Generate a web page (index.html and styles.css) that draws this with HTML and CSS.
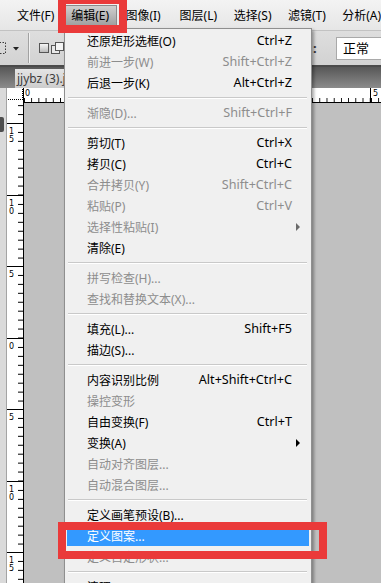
FILE: index.html
```html
<!DOCTYPE html>
<html lang="zh-CN">
  <head>
    <meta charset="utf-8" />
    <meta name="viewport" content="width=device-width, initial-scale=1" />
    <title>编辑菜单 - 定义图案</title>
    <link rel="stylesheet" href="styles.css">
  </head>
  <body>
    <div class="app">
      <!-- top menu bar -->
      <div class="menubar">
        <span class="mb-item">文件(F)</span>
        <span class="mb-item active">编辑(E)</span>
        <span class="mb-item">图像(I)</span>
        <span class="mb-item">图层(L)</span>
        <span class="mb-item">选择(S)</span>
        <span class="mb-item">滤镜(T)</span>
        <span class="mb-item">分析(A)</span>
      </div>

      <!-- tool options bar -->
      <div class="options">
        <svg class="opt-tool" width="8" height="14" viewBox="0 0 8 14">
          <rect x="-6.5" y="1.5" width="12" height="11" fill="none" stroke="#3a3a3a" stroke-dasharray="1.5 1.5"/>
        </svg>
        <svg class="opt-drop" width="6" height="4" viewBox="0 0 6 4">
          <polygon points="0,0 6,0 3,3.5" fill="#222"/>
        </svg>
        <span class="opt-sep"></span>
        <svg class="opt-btn" width="10" height="10" viewBox="0 0 10 10">
          <defs>
            <linearGradient id="g1" x1="0" y1="0" x2="0" y2="1">
              <stop offset="0" stop-color="#fafafa"/>
              <stop offset="1" stop-color="#b8b8b8"/>
            </linearGradient>
          </defs>
          <rect x="0.5" y="0.5" width="9" height="9" fill="url(#g1)" stroke="#555"/>
        </svg>
        <svg class="opt-btn2" width="13" height="13" viewBox="0 0 13 13">
          <rect x="0.5" y="3.5" width="8" height="8" fill="#e8e8e8" stroke="#555"/>
          <rect x="4.5" y="0.5" width="8" height="8" fill="#f4f4f4" stroke="#555"/>
        </svg>
        <div class="opt-right">
          <span class="opt-colon">:</span>
          <span class="opt-mode">正常</span>
        </div>
      </div>

      <!-- document tabs -->
      <div class="tabbar">
        <div class="doc-tab">jjybz (3).jpg</div>
      </div>

      <!-- rulers and canvas -->
      <div class="workspace">
        <div class="side-strip"><div class="grip"></div></div>
        <div class="vruler-col">
          <div class="ruler-corner"><div class="corner-mark"></div></div>
          <div class="vr-lead"></div>
          <div class="vr-seg"><span>1</span><span>5</span></div>
          <div class="vr-seg"><span>1</span><span>0</span></div>
          <div class="vr-seg"><span>5</span></div>
          <div class="vr-seg"><span>0</span></div>
          <div class="vr-seg"><span>5</span></div>
          <div class="vr-seg"><span>1</span><span>0</span></div>
          <div class="vr-seg"><span>1</span><span>5</span></div>
        </div>
        <div class="canvas-col">
          <div class="hruler">
            <div class="hr-seg first"><span>0</span></div>
            <div class="hr-seg"><span>5</span></div>
          </div>
          <div class="canvas"></div>
        </div>
      </div>

      <!-- open Edit menu -->
      <div class="menu">
        <div class="mi"><span>还原矩形选框(O)</span><span class="key">Ctrl+Z</span></div>
        <div class="mi off"><span>前进一步(W)</span><span class="key">Shift+Ctrl+Z</span></div>
        <div class="mi"><span>后退一步(K)</span><span class="key">Alt+Ctrl+Z</span></div>
        <div class="sep"></div>
        <div class="mi off"><span>渐隐(D)...</span><span class="key">Shift+Ctrl+F</span></div>
        <div class="sep"></div>
        <div class="mi"><span>剪切(T)</span><span class="key">Ctrl+X</span></div>
        <div class="mi"><span>拷贝(C)</span><span class="key">Ctrl+C</span></div>
        <div class="mi off"><span>合并拷贝(Y)</span><span class="key">Shift+Ctrl+C</span></div>
        <div class="mi off"><span>粘贴(P)</span><span class="key">Ctrl+V</span></div>
        <div class="mi off"><span>选择性粘贴(I)</span><span class="sub"></span></div>
        <div class="mi"><span>清除(E)</span></div>
        <div class="sep"></div>
        <div class="mi off"><span>拼写检查(H)...</span></div>
        <div class="mi off"><span>查找和替换文本(X)...</span></div>
        <div class="sep"></div>
        <div class="mi"><span>填充(L)...</span><span class="key">Shift+F5</span></div>
        <div class="mi"><span>描边(S)...</span></div>
        <div class="sep"></div>
        <div class="mi"><span>内容识别比例</span><span class="key">Alt+Shift+Ctrl+C</span></div>
        <div class="mi off"><span>操控变形</span></div>
        <div class="mi"><span>自由变换(F)</span><span class="key">Ctrl+T</span></div>
        <div class="mi"><span>变换(A)</span><span class="sub"></span></div>
        <div class="mi off"><span>自动对齐图层...</span></div>
        <div class="mi off"><span>自动混合图层...</span></div>
        <div class="sep"></div>
        <div class="mi"><span>定义画笔预设(B)...</span></div>
        <div class="mi hl"><span>定义图案...</span></div>
        <div class="mi off"><span>定义自定形状...</span></div>
        <div class="sep"></div>
        <div class="mi"><span>清理(R)</span><span class="sub"></span></div>
      </div>

      <!-- red annotation frames -->
      <div class="mark mark-top"></div>
      <div class="mark mark-item"></div>
    </div>
  </body>
</html>
```

FILE: styles.css
```css
* {
  box-sizing: border-box;
}

html, body {
  margin: 0;
  height: 100%;
}

body {
  overflow: hidden;
  font-family: "Noto Sans", "Noto Sans CJK SC", sans-serif;
  font-size: 12px;
  color: #000;
  background: #c0c0c0;
}

.app {
  position: relative;
  width: 381px;
  height: 583px;
  overflow: hidden;
}

/* menu bar */
.menubar {
  display: flex;
  align-items: center;
  height: 30px;
  padding: 2px 0 0 9px;
  background: linear-gradient(#f3f3f3, #e6e6e6);
}

.mb-item {
  flex: none;
  width: 54.2px;
  height: 22px;
  line-height: 22px;
  padding-left: 8px;
  white-space: nowrap;
}

.mb-item.active {
  background: linear-gradient(#d2d2d2, #9b9b9b);
  box-shadow: inset 0 0 0 1px #8a8a8a;
}

/* options bar */
.options {
  display: flex;
  align-items: center;
  height: 37px;
  background: linear-gradient(#dedede, #d2d2d2);
  border-top: 1px solid #c2c2c2;
  border-bottom: 2px solid #4a4a4a;
}

.opt-tool {
  flex: none;
}

.opt-drop {
  flex: none;
  margin-left: 5px;
  margin-top: 2px;
}

.opt-sep {
  flex: none;
  width: 2px;
  height: 30px;
  margin-left: 9px;
  border-left: 1px solid #a2a2a2;
  border-right: 1px solid #f2f2f2;
}

.opt-btn {
  flex: none;
  margin-left: 9px;
}

.opt-btn2 {
  flex: none;
  margin-left: 2px;
}

.opt-right {
  display: flex;
  align-items: center;
  margin-left: auto;
  width: 68px;
}

.opt-colon {
  width: 23px;
  font-size: 13px;
  font-weight: bold;
  color: #333;
}

.opt-mode {
  width: 45px;
  height: 23px;
  line-height: 21px;
  padding-left: 6px;
  background: #fff;
  border: 1px solid #a9a9a9;
  border-right: none;
  font-size: 13px;
  white-space: nowrap;
}

/* document tabs */
.tabbar {
  display: flex;
  align-items: flex-end;
  height: 21px;
  padding-left: 15px;
  background: linear-gradient(#575757, #8b8b8b);
}

.doc-tab {
  width: 49px;
  height: 19px;
  line-height: 19px;
  padding-left: 2px;
  overflow: hidden;
  background: linear-gradient(#e4e4e4, #cdcdcd);
  color: #3c3c3c;
  white-space: nowrap;
}

/* workspace with rulers */
.workspace {
  display: flex;
  height: 495px;
}

.side-strip {
  flex: none;
  width: 7px;
  padding-top: 29px;
  background: #dadada;
  border-right: 1px solid #a4a4a4;
}

.grip {
  width: 4px;
  height: 15px;
  background: #4e4e4e;
  border-radius: 0 2px 2px 0;
}

.vruler-col {
  flex: none;
  display: flex;
  flex-direction: column;
  width: 17px;
  background: #fff;
  border-right: 1px solid #000;
  font-family: "DejaVu Sans", sans-serif;
  font-size: 8px;
}

.ruler-corner {
  flex: none;
  height: 15px;
  padding: 1px 0 0 1px;
}

.corner-mark {
  width: 15px;
  height: 11px;
  border-right: 1px dotted #000;
  border-bottom: 1px dotted #000;
}

.vr-lead,
.vr-seg {
  flex: none;
  background-image: linear-gradient(#000 0 1px, transparent 1px);
  background-size: 5px 8.94px;
  background-repeat: repeat-y;
}

.vr-lead {
  height: 20px;
  background-position: right bottom;
}

.vr-seg {
  height: 71.5px;
  padding: 4px 0 0 2px;
  border-top: 1px solid #000;
  background-origin: border-box;
  background-position: right top;
}

.vr-seg span {
  display: block;
  height: 8px;
  line-height: 8px;
}

.canvas-col {
  flex: 1;
  display: flex;
  flex-direction: column;
}

.hruler {
  flex: none;
  display: flex;
  height: 15px;
  background: #fff;
  border-bottom: 1px solid #000;
  font-family: "DejaVu Sans", sans-serif;
  font-size: 8px;
}

.hr-seg {
  flex: none;
  width: 346px;
  padding: 1px 0 0 2px;
  border-left: 1px solid #000;
  background-image: linear-gradient(to right, #000 0 1px, transparent 1px);
  background-size: 7.21px 4px;
  background-repeat: repeat-x;
  background-position: left bottom;
  line-height: 9px;
}

.hr-seg.first {
  border-left: none;
  padding-left: 1px;
}

.canvas {
  flex: 1;
  background: #c0c0c0;
}

/* drop-down menu */
.menu {
  position: absolute;
  left: 64px;
  top: 28px;
  width: 248px;
  padding: 1px 2px;
  background: #f0f0f0;
  border: 1px solid #8f8f8f;
  box-shadow: 2px 2px 3px rgba(0, 0, 0, 0.35);
}

.mi {
  display: flex;
  align-items: center;
  height: 21px;
  padding: 0 17px 0 20px;
  white-space: nowrap;
}

.mi .key {
  margin-left: auto;
  font-size: 12.6px;
}

.mi.off {
  color: #8d8d8d;
}

.mi.hl {
  background: #3399ff;
  color: #fff;
}

.mi .sub {
  width: 0;
  height: 0;
  margin-left: auto;
  margin-right: -8px;
  border-left: 4px solid #000;
  border-top: 4px solid transparent;
  border-bottom: 4px solid transparent;
}

.mi.off .sub {
  border-left-color: #6a6a6a;
}

.sep {
  height: 2px;
  margin: 4px 2px 3px 1px;
  background: #c9c9c9;
  border-bottom: 1px solid #fff;
}

/* red annotation frames */
.mark {
  position: absolute;
  border: 8px solid #ea3a3a;
}

.mark-top {
  left: 58px;
  top: -4px;
  width: 69px;
  height: 37px;
}

.mark-item {
  left: 58px;
  top: 522px;
  width: 269px;
  height: 37px;
}
```
